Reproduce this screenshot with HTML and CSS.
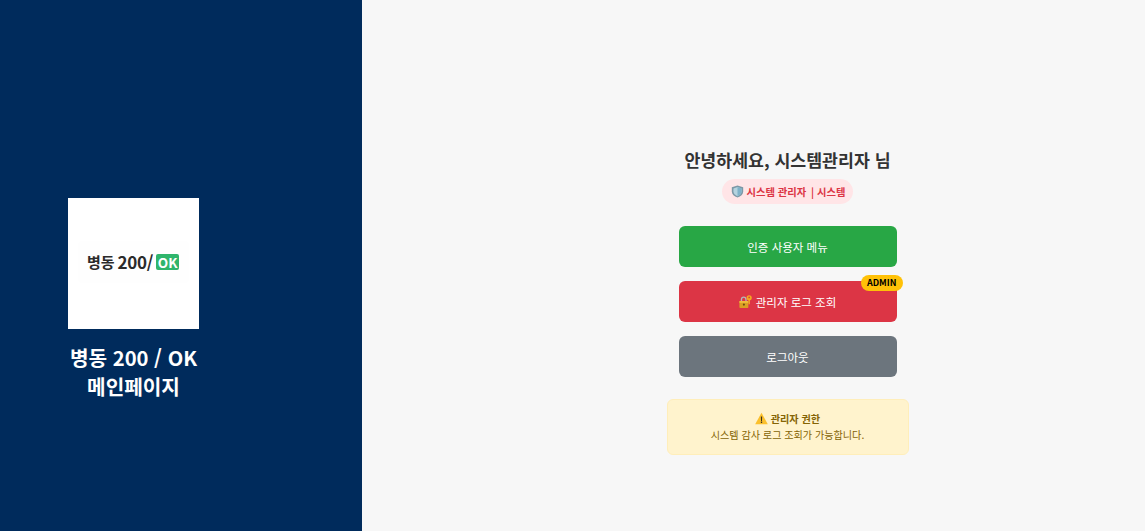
FILE: index.html
```html
<!DOCTYPE html>
<html lang="ko">

<head>
    <meta charset="UTF-8">
    <title>병동 200 / OK</title>
    <link rel="stylesheet" href="styles.css">
</head>

<body>
    <div class="layout">
        <aside class="side">
            <div class="brand">
                <div class="logo">
                    <div class="logo-inner">
                        <span class="logo-ko">병동</span>
                        <span class="logo-num">200/</span>
                        <span class="logo-ok">OK</span>
                    </div>
                </div>
                <h1 class="brand-title">병동 200 / OK<br>메인페이지</h1>
            </div>
        </aside>
        <main class="content">
            <section class="panel">
                <h2 class="hello">안녕하세요, 시스템관리자 님</h2>
                <div class="role">
                    <svg class="icon-shield" viewBox="0 0 16 16" aria-hidden="true">
                        <path d="M8 .5 15 2.800V8c0 3.700-2.900 6.200-7 7.500C3.900 14.200 1 11.700 1 8V2.800z" fill="#7d98a6" />
                        <path d="M8 2.600 13 4.200V8c0 2.700-2.100 4.600-5 5.700C5.100 12.600 3 10.700 3 8V4.200z" fill="#b5d3df" />
                        <path d="M8 2.600 13 4.200V8c0 2.700-2.100 4.600-5 5.700z" fill="#7fb2c9" />
                    </svg>
                    <span>시스템 관리자 <span class="sep">|</span> 시스템</span>
                </div>
                <a class="btn btn-green" href="#">인증 사용자 메뉴</a>
                <a class="btn btn-red" href="#">
                    <svg class="icon-lock" viewBox="0 0 16 16" aria-hidden="true">
                        <path d="M3 8V5.500a2.800 2.800 0 0 1 5.600 0V8" fill="none" stroke="#b4b6ba" stroke-width="1.600" />
                        <rect x="0.500" y="7.500" width="11" height="8.500" rx="1" fill="#dba024" />
                        <rect x="0.500" y="7.500" width="11" height="2" fill="#f2c23e" />
                        <circle cx="6" cy="11.800" r="1.300" fill="#6b4a12" />
                        <circle cx="12.500" cy="3.500" r="3.200" fill="#f5a81f" />
                        <circle cx="12.500" cy="3" r="1.100" fill="#d9443c" />
                        <path d="M11.800 6h1.500v5.500h-1.500z" fill="#f5b81f" />
                    </svg>
                    관리자 로그 조회
                    <span class="badge">ADMIN</span>
                </a>
                <a class="btn btn-gray" href="#">로그아웃</a>
                <div class="notice">
                    <p class="notice-title">
                        <svg class="icon-warn" viewBox="0 0 16 16" aria-hidden="true">
                            <path d="M8 1 15.800 15H.2z" fill="#fbc02d" />
                            <path d="M7.200 5.500h1.600l-.2 5.500H7.400zM7.200 11.800h1.600v1.600H7.200z" fill="#3b3320" />
                        </svg>
                        관리자 권한
                    </p>
                    <p class="notice-text">시스템 감사 로그 조회가 가능합니다.</p>
                </div>
            </section>
        </main>
    </div>
</body>

</html>
```

FILE: styles.css
```css
* {
    box-sizing: border-box;
}

body {
    margin: 0;
    background-color: #f7f7f7;
    font-family: "Noto Sans CJK KR", "Noto Sans", sans-serif;
    color: #333;
}

.layout {
    display: flex;
    height: 531px;
    overflow: hidden;
}

/* Left side */

.side {
    width: 362px;
    flex-shrink: 0;
    background-color: #002b5c;
    padding-top: 198px;
    padding-left: 68px;
}

.brand {
    width: 131px;
}

.logo {
    width: 131px;
    height: 131px;
    background-color: #fff;
    display: flex;
    align-items: center;
    justify-content: center;
}

.logo-inner {
    display: flex;
    align-items: center;
    width: 111px;
    height: 42px;
    margin-top: -4px;
    padding-left: 9px;
    border-radius: 4px;
    background-color: #fefefe;
    color: #2b2b2b;
    font-weight: 700;
    white-space: nowrap;
}

.logo-ko {
    font-size: 15px;
}

.logo-num {
    margin-left: 3px;
    font-size: 17px;
    letter-spacing: -0.3px;
}

.logo-ok {
    margin-left: 3px;
    width: 23px;
    background-color: #2fb56c;
    color: #fff;
    font-size: 13.500px;
    line-height: 16px;
    text-align: center;
    border-radius: 2px;
}

.brand-title {
    margin: 14px -10px 0;
    color: #fff;
    font-size: 20.200px;
    font-weight: 700;
    line-height: 29px;
    text-align: center;
    white-space: nowrap;
}

/* Right side */

.content {
    flex: 1;
    padding-left: 68px;
    padding-top: 148px;
    display: flex;
    justify-content: center;
    align-items: flex-start;
}

.panel {
    width: 242px;
    display: flex;
    flex-direction: column;
    align-items: center;
}

.hello {
    margin: 0;
    font-size: 17.300px;
    font-weight: 700;
    line-height: 24px;
    color: #333;
    white-space: nowrap;
}

.role {
    display: flex;
    align-items: center;
    gap: 3px;
    height: 25px;
    margin-top: 7px;
    margin-bottom: 22px;
    padding: 0 8px 0 9px;
    border-radius: 13px;
    background-color: #ffe5e7;
    color: #dc3545;
    font-size: 10.300px;
    font-weight: 700;
    white-space: nowrap;
}

.sep {
    margin-left: 2px;
}

.icon-shield {
    width: 13px;
    height: 13px;
}

.btn {
    position: relative;
    display: flex;
    align-items: center;
    justify-content: center;
    gap: 4px;
    width: 218px;
    height: 41px;
    margin-bottom: 14px;
    border-radius: 6px;
    color: #fff;
    font-size: 11.500px;
    text-decoration: none;
}

.btn-green {
    background-color: #28a745;
}

.btn-red {
    background-color: #dc3545;
}

.btn-gray {
    background-color: #6c757d;
}

.icon-lock {
    width: 13px;
    height: 13px;
}

.badge {
    position: absolute;
    top: -6px;
    right: -6px;
    height: 16px;
    padding: 0 6px;
    border-radius: 8px;
    background-color: #ffc107;
    color: #000;
    font-size: 9px;
    font-weight: 700;
    line-height: 16px;
}

.notice {
    width: 242px;
    height: 56px;
    margin-top: 8px;
    padding-top: 11px;
    border: 1px solid #ffeeba;
    border-radius: 6px;
    background-color: #fff3cd;
    color: #856404;
    text-align: center;
    font-size: 10.100px;
    line-height: 16px;
}

.notice p {
    margin: 0;
}

.notice-title {
    font-weight: 700;
}

.icon-warn {
    width: 13px;
    height: 13px;
    vertical-align: -2px;
}
```
